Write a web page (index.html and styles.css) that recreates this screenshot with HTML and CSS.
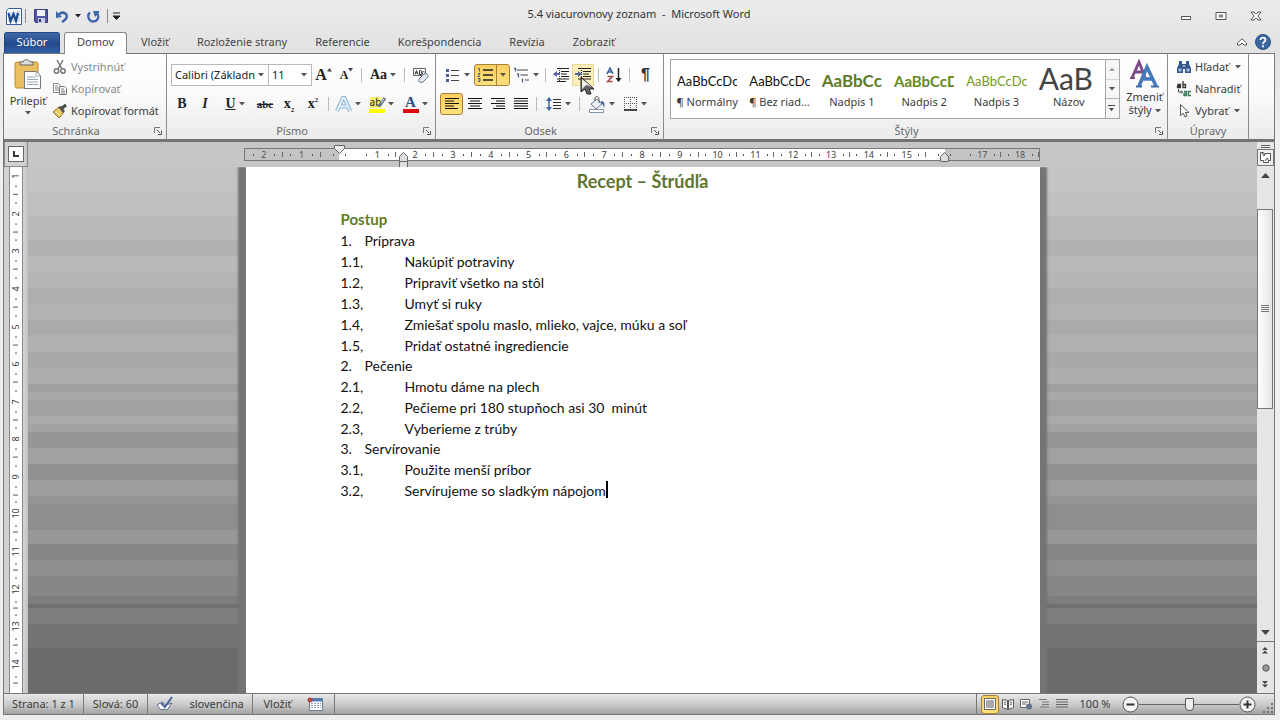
FILE: index.html
```html
<!DOCTYPE html>
<html lang="sk">
<head>
<meta charset="utf-8">
<meta name="viewport" content="width=device-width, initial-scale=1">
<title>5.4 viacurovnovy zoznam - Microsoft Word</title>
<link rel="stylesheet" href="styles.css">
</head>
<body>
<svg class="defs" aria-hidden="true">
  <symbol id="arrow" viewBox="0 0 6 4"><path d="M0 0h6L3 3.5z" fill="currentColor"/></symbol>
  <symbol id="launcher" viewBox="0 0 8 8"><path d="M.5 6V.5H6" fill="none" stroke="#777"/><path d="M3 3l3 3M7.500 4v3.500H4" fill="none" stroke="#555"/></symbol>
</svg>

<header class="titlebar">
  <div class="quick">
    <button class="qbtn" aria-label="Word"><svg width="16" height="17" viewBox="0 0 16 17"><path d="M2.500.5h13v16H.5v-14z" fill="#fff" stroke="#35609b"/><path d="M11 4h3M11 7h3M11 10h3M11 13h3" stroke="#7fa0cc"/><path d="M2 4h11v10H2z" fill="#d7e4f5"/><path d="M2.500 5l2 8L7.500 6l2.500 7 2-8" fill="none" stroke="#1d4a8c" stroke-width="2.200"/></svg></button>
    <span class="qsep"></span>
    <button class="qbtn wide" aria-label="Uložiť"><svg width="14" height="14" viewBox="0 0 14 14"><path d="M.5.5h13v13h-12l-1-1z" fill="#5556a0" stroke="#3b3c80"/><path d="M3 1h8v6H3z" fill="#eef1fa"/><path d="M4 9h7v5H4z" fill="#c9cce6"/><path d="M5 10h2v3H5z" fill="#333570"/></svg></button>
    <button class="qbtn" aria-label="Späť"><svg width="13" height="13" viewBox="0 0 13 13"><path d="M3 4.500C7 .5 13 4 10 8.500 9 10 8 11 6 12" fill="none" stroke="#3e66a8" stroke-width="2.500"/><path d="M0 1v7l6-1z" fill="#3e66a8"/></svg></button>
    <button class="qbtn slim" aria-label="Späť – zoznam"><svg class="arr dark"><use href="#arrow"/></svg></button>
    <button class="qbtn" aria-label="Znova"><svg width="13" height="13" viewBox="0 0 13 13"><path d="M3 2.500C0 5 1 11 6 11.500 11 11.500 13 6 9.500 3" fill="none" stroke="#3e66a8" stroke-width="2.300"/><path d="M6 1h6v2L8 7z" fill="#3e66a8"/></svg></button>
    <span class="qsep"></span>
    <button class="qbtn slim" aria-label="Prispôsobiť panel"><svg width="7" height="8" viewBox="0 0 7 8"><path d="M0 1h7M0 4h7L3.500 7.500z" stroke="#222" stroke-width="1" fill="#222"/></svg></button>
  </div>
  <h1 class="caption">5.4 viacurovnovy zoznam&nbsp; -&nbsp; Microsoft Word</h1>
  <div class="winbtns">
    <button aria-label="Minimalizovať"><svg width="12" height="12" viewBox="0 0 12 12"><path d="M1.500 6.500h9v3h-9z" fill="#fff" stroke="#555"/></svg></button>
    <button aria-label="Obnoviť"><svg width="12" height="12" viewBox="0 0 12 12"><path d="M1 2.500h10v7H1zM4.500 5h3v2h-3z" fill="#fff" stroke="#555"/></svg></button>
    <button aria-label="Zavrieť"><svg width="12" height="12" viewBox="0 0 12 12"><path d="M1 2h3l2 2 2-2h3L8 6l3 4H8L6 8l-2 2H1l3-4z" fill="#fff" stroke="#555"/></svg></button>
  </div>
</header>

<nav class="tabs" aria-label="Karty">
  <button class="tab file">Súbor</button>
  <button class="tab current">Domov</button>
  <button class="tab">Vložiť</button>
  <button class="tab">Rozloženie strany</button>
  <button class="tab">Referencie</button>
  <button class="tab">Korešpondencia</button>
  <button class="tab">Revízia</button>
  <button class="tab">Zobraziť</button>
  <span class="tabtools">
    <button aria-label="Zbaliť pás"><svg width="10" height="8" viewBox="0 0 10 8"><path d="M.5 5L5 .8 9.500 5v2H7L5 5 3 7H.5z" fill="#fff" stroke="#555"/></svg></button>
    <button aria-label="Pomocník"><svg width="16" height="16" viewBox="0 0 16 16"><circle cx="8" cy="8" r="7.500" fill="#3a669f" stroke="#29507f"/><path d="M5.500 6c0-3.500 5.200-3 5 0C10.400 7.700 8 7.500 8 10M8 11.300v1.900" fill="none" stroke="#fff" stroke-width="1.800"/></svg></button>
  </span>
</nav>

<section class="ribbon" aria-label="Domov">
  <div class="group clipboard">
    <div class="body">
      <button class="big"><svg width="28" height="31" viewBox="0 0 28 31"><rect x="1" y="3" width="23" height="26" rx="2" fill="#eabf62" stroke="#b98a35"/><path d="M6 6V3h3c0-3 7-3 7 0h3v3z" fill="#ddd" stroke="#666"/><path d="M10.500 12.500h12l4 4v13h-16z" fill="#fff" stroke="#777"/><path d="M22 12.500v4.500h4.500M13 18h9M13 20.500h11M13 23h11M13 25.500h11" fill="none" stroke="#9aa7b8"/></svg><span>Prilepiť</span><svg class="arr"><use href="#arrow"/></svg></button>
      <div class="stack">
        <button class="item off"><svg width="16" height="16" viewBox="0 0 16 16"><path d="M5 1l5 9M11 1L6 10" stroke="#777" stroke-width="1.500"/><circle cx="4.500" cy="12" r="2.200" fill="none" stroke="#777" stroke-width="1.500"/><circle cx="11" cy="12" r="2.200" fill="none" stroke="#777" stroke-width="1.500"/></svg>Vystrihnúť</button>
        <button class="item off"><svg width="16" height="16" viewBox="0 0 16 16"><path d="M1.500 2.500h5l2 2v7h-7z" fill="#fff" stroke="#888"/><path d="M3 5h3M3 7h4M3 9h4" stroke="#888"/><path d="M7.500 5.500h5l2 2v6h-7z" fill="#fff" stroke="#777"/><path d="M9 8h3M9 10h4M9 12h4" stroke="#777"/></svg>Kopírovať</button>
        <button class="item"><svg width="16" height="16" viewBox="0 0 16 16"><path d="M1 9l6-5 5 5-5 6z" fill="#e8ca62" stroke="#8a7227"/><path d="M6 4l3-1 4 5-2 2z" fill="#555"/><path d="M10 5l4-3" stroke="#444" stroke-width="3"/><path d="M4 9l4 3" stroke="#fff3b5"/></svg>Kopírovať formát</button>
      </div>
    </div>
    <footer><span>Schránka</span><button aria-label="Schránka – možnosti"><svg class="launch"><use href="#launcher"/></svg></button></footer>
  </div>

  <div class="group font">
    <div class="rows">
      <div class="row">
        <label class="combo name"><select aria-label="Písmo"><option>Calibri (Základn</option></select><svg class="arr"><use href="#arrow"/></svg></label>
        <label class="combo size"><select aria-label="Veľkosť písma"><option>11</option></select><svg class="arr"><use href="#arrow"/></svg></label>
        <button class="b24" aria-label="Zväčšiť písmo"><span class="serif lg">A</span><svg class="tip" viewBox="0 0 6 4"><path d="M0 3.500h5L2.500 0z" fill="#445"/></svg></button>
        <button class="b22" aria-label="Zmenšiť písmo"><span class="serif sm">A</span><svg class="tip" viewBox="0 0 6 4"><path d="M0 0h5L2.500 3.500z" fill="#445"/></svg></button>
        <i class="sep"></i>
        <button class="b36" aria-label="Zmeniť veľkosť písmen"><span class="serif md">Aa</span><svg class="arr"><use href="#arrow"/></svg></button>
        <i class="sep"></i>
        <button class="b24" aria-label="Vymazať formátovanie"><svg width="17" height="17" viewBox="0 0 17 17"><path d="M1.500 1.500h12v7h-12z" fill="#fff" stroke="#666"/><path d="M3 7.500l1.500-4L6 7.500M3.500 6h2M7.500 3.500v4h1.500c2 0 1-2 0-2 1 0 1-2-.3-2zM12.500 5c-3-2-3 4 0 2" fill="none" stroke="#333"/><path d="M7 12l5-5c4-1 5 2 3 4l-4 4c-3 1-5 0-4-3z" fill="#e4e8ef" stroke="#66758c"/></svg></button>
      </div>
      <div class="row">
        <button class="b22 serif md">B</button>
        <button class="b24 serif md ital">I</button>
        <button class="b36"><span class="serif md under">U</span><svg class="arr"><use href="#arrow"/></svg></button>
        <button class="b24 serif tiny strike">abc</button>
        <button class="b24 serif md" aria-label="Dolný index"><span>x<sub>2</sub></span></button>
        <button class="b24 serif md" aria-label="Horný index"><span>x<sup>2</sup></span></button>
        <i class="sep"></i>
        <button class="b32" aria-label="Textové efekty"><svg width="17" height="17" viewBox="0 0 17 17"><path d="M2 15L8 2h1.500L15 15M5 10.500h7" fill="none" stroke="#8fb4d6" stroke-width="4"/><path d="M2 15L8 2h1.500L15 15M5 10.500h7" fill="none" stroke="#eaf4fc" stroke-width="1.800"/></svg><svg class="arr"><use href="#arrow"/></svg></button>
        <button class="b34" aria-label="Zvýraznenie"><span class="swatch hl"><b>ab</b><svg width="9" height="11" viewBox="0 0 9 11"><path d="M8 1L3 8l-2 1" stroke="#66758a" stroke-width="3" fill="none"/><path d="M7 2L4 6" stroke="#dfe6ee"/></svg></span><svg class="arr"><use href="#arrow"/></svg></button>
        <button class="b34" aria-label="Farba písma"><span class="swatch fc"><b>A</b></span><svg class="arr"><use href="#arrow"/></svg></button>
      </div>
    </div>
    <footer><span>Písmo</span><button aria-label="Písmo – možnosti"><svg class="launch"><use href="#launcher"/></svg></button></footer>
  </div>

  <div class="group para">
    <div class="rows">
      <div class="row">
        <button class="b34" aria-label="Odrážky"><svg width="16" height="16" viewBox="0 0 16 16"><path d="M6 3.500h8M6 8.500h8M6 13.500h8" stroke="#444"/><path d="M1 2h3v3H1zM1 7h3v3H1zM1 12h3v3H1z" fill="#4a5f93"/></svg><svg class="arr"><use href="#arrow"/></svg></button>
        <button class="split active" aria-label="Číslovanie"><svg width="22" height="16" viewBox="0 0 22 16"><path d="M9 3h10M9 8h10M9 13h10" stroke="#222" stroke-width="1.300"/><path d="M4 1.500h1.500v3M4 6.500h2l-2 3h2M4 11.500h2v3H4M4.500 13H6" fill="none" stroke="#45608e"/></svg><span class="drop"><svg class="arr"><use href="#arrow"/></svg></span></button>
        <button class="b32" aria-label="Viacúrovňový zoznam"><svg width="17" height="16" viewBox="0 0 17 16"><path d="M4 3h11M7.500 8H15M12 13h4" stroke="#444"/><path d="M1 1.500h1.500v3M5.500 6.500v4M4 7h1M9.500 11.500v4" fill="none" stroke="#45608e" stroke-width="1.300"/></svg><svg class="arr"><use href="#arrow"/></svg></button>
        <i class="sep"></i>
        <button class="b24" aria-label="Zmenšiť zarážku"><svg width="16" height="16" viewBox="0 0 16 16"><path d="M4 1.500h12M8 4.500h8M8 7h6M8 9.500h8M4 12h12M4 14.500h9" stroke="#222"/><path d="M6.500 1v14" stroke="#222" stroke-dasharray="1 1"/><path d="M0 7l4-3v2h3v2H4v2z" fill="#5a63b0"/></svg></button>
        <button class="b22 hover" aria-label="Zväčšiť zarážku"><svg width="16" height="16" viewBox="0 0 16 16"><path d="M3 1.500h13M8 4.500h8M8 7h6M8 9.500h8M3 12h13" stroke="#222"/><path d="M6.500 1v14" stroke="#222" stroke-dasharray="1 1"/><path d="M7 7L3 4v2H0v2h3v2z" fill="#4d64a0"/></svg>
          <svg class="pointer" width="16" height="20" viewBox="0 0 16 20"><path d="M1 1v15l4-3 2 5h4l-2-5h5z" fill="#666" stroke="#222"/><path d="M2 3v10l3-3 2-1 5 2z" fill="#eee"/></svg></button>
        <i class="sep wide"></i>
        <button class="b22" aria-label="Zoradiť"><svg width="17" height="16" viewBox="0 0 17 16"><path d="M1 7l3-6 3 6M2 5h4" fill="none" stroke="#3a5b97" stroke-width="1.500"/><path d="M1.500 9.500h5l-5 5h5" fill="none" stroke="#a34a52" stroke-width="1.500"/><path d="M12.500 1v13" stroke="#222" stroke-width="1.500"/><path d="M9.500 11h6l-3 4z" fill="#222"/></svg></button>
        <i class="sep wide"></i>
        <button class="b24 pilcrow" aria-label="Zobraziť všetko">¶</button>
      </div>
      <div class="row">
        <button class="b24 active" aria-label="Zarovnať vľavo"><svg width="14" height="14" viewBox="0 0 14 14"><path d="M0 1.500h14M0 4h9M0 6.500h14M0 9h9M0 11.500h13" stroke="#111" stroke-width="1.200"/></svg></button>
        <button class="b24" aria-label="Centrovať"><svg width="14" height="14" viewBox="0 0 14 14"><path d="M0 1.500h14M2 4h10M0 6.500h14M2 9h10M0 11.500h14" stroke="#111" stroke-width="1.200"/></svg></button>
        <button class="b24" aria-label="Zarovnať vpravo"><svg width="14" height="14" viewBox="0 0 14 14"><path d="M0 1.500h14M5 4h9M0 6.500h14M5 9h9M2 11.500h12" stroke="#111" stroke-width="1.200"/></svg></button>
        <button class="b24" aria-label="Podľa okraja"><svg width="14" height="14" viewBox="0 0 14 14"><path d="M0 1.500h14M0 4h14M0 6.500h14M0 9h14M0 11.500h14" stroke="#111" stroke-width="1.200"/></svg></button>
        <i class="sep wide"></i>
        <button class="b34" aria-label="Riadkovanie"><svg width="16" height="16" viewBox="0 0 16 16"><path d="M7 3.500h8M7 6.500h8M7 9.500h8M7 12.500h8" stroke="#333"/><path d="M3 2v12" stroke="#3f659f" stroke-width="1.500"/><path d="M0 5l3-4 3 4zM0 11l3 4 3-4z" fill="#3f659f"/></svg><svg class="arr"><use href="#arrow"/></svg></button>
        <i class="sep wide"></i>
        <button class="b34" aria-label="Podfarbenie"><svg width="18" height="17" viewBox="0 0 18 17"><path d="M3 8l6-5 5 5-6 5z" fill="#e9eef4" stroke="#66758a"/><path d="M7 5V2c0-2 4-2 4 1v4" fill="none" stroke="#555"/><path d="M13 5c4 0 4 4 3 7-1-3-1-4-3-5z" fill="#41679b"/><path d="M1.500 13.500h14v3h-14z" fill="#fff" stroke="#8494aa"/></svg><svg class="arr"><use href="#arrow"/></svg></button>
        <button class="b34" aria-label="Orámovanie"><svg width="14" height="14" viewBox="0 0 14 14"><path d="M.5 0v13M6.500 0v13M12.500 0v13M0 .5h13M0 6.500h13" stroke="#555" stroke-dasharray="1 1"/><path d="M0 13h13" stroke="#111" stroke-width="1.500"/></svg><svg class="arr"><use href="#arrow"/></svg></button>
      </div>
    </div>
    <footer><span>Odsek</span><button aria-label="Odsek – možnosti"><svg class="launch"><use href="#launcher"/></svg></button></footer>
  </div>

  <div class="group styles">
    <div class="body">
      <div class="gallery">
        <button class="style"><span class="sample">AaBbCcDc</span><span class="label">¶ Normálny</span></button>
        <button class="style"><span class="sample">AaBbCcDc</span><span class="label">¶ Bez riad...</span></button>
        <button class="style"><span class="sample h1">AaBbCc</span><span class="label">Nadpis 1</span></button>
        <button class="style"><span class="sample h2">AaBbCcD</span><span class="label">Nadpis 2</span></button>
        <button class="style"><span class="sample h3">AaBbCcDc</span><span class="label">Nadpis 3</span></button>
        <button class="style"><span class="sample ttl">AaB</span><span class="label">Názov</span></button>
        <div class="scroller">
          <button aria-label="Nahor" class="off"><svg class="arr up"><use href="#arrow"/></svg></button>
          <button aria-label="Nadol"><svg class="arr"><use href="#arrow"/></svg></button>
          <button aria-label="Viac"><svg width="8" height="7" viewBox="0 0 8 7"><path d="M0 .5h7" stroke="#444"/><path d="M1 3h5L3.500 6z" fill="#444"/></svg></button>
        </div>
      </div>
      <button class="big change"><svg width="30" height="30" viewBox="0 0 30 30"><path d="M2 19L9 3l6 15M5 13h8" fill="none" stroke="#7b4a86" stroke-width="2.800"/><path d="M0 19h5M12 19h5" stroke="#7b4a86" stroke-width="2"/><path d="M9 27L17 8l9 19M12 20h10" fill="none" stroke="#4679b9" stroke-width="3.500"/><path d="M6 27.500h6M21 27.500h8" stroke="#3768a8" stroke-width="2"/></svg><span>Zmeniť<br>štýly <svg class="arr"><use href="#arrow"/></svg></span></button>
    </div>
    <footer><span>Štýly</span><button aria-label="Štýly – možnosti"><svg class="launch"><use href="#launcher"/></svg></button></footer>
  </div>

  <div class="group edit">
    <div class="body"><div class="stack">
      <button class="item"><svg width="16" height="16" viewBox="0 0 16 16"><path d="M3 2h3v3h4V2h3v3l2 4v5H9v-4H7v4H1V9l2-4z" fill="#2f568d"/><path d="M2.500 9.500h3v3h-3zM10.500 9.500h3v3h-3z" fill="#a9c2e2"/><path d="M6.500 7h3" stroke="#fff"/></svg>Hľadať<svg class="arr"><use href="#arrow"/></svg></button>
      <button class="item"><svg width="16" height="16" viewBox="0 0 16 16"><path d="M1.500 3.500h3v3h-3v-1.500h3M7 0v6.500h2.500v-3H7" fill="none" stroke="#333" stroke-width="1.300"/><path d="M2.500 8v3h4M5 9.500L6.500 11 5 12.500" fill="none" stroke="#444"/><path d="M8 10.500h2.500v4H8v-2h2M15 10.500h-2.500v4H15" fill="none" stroke="#2f7a52" stroke-width="1.300"/></svg>Nahradiť</button>
      <button class="item"><svg width="16" height="16" viewBox="0 0 16 16"><path d="M4.500 1.500v11l2.700-2.300L9 14l2-1-1.700-3.500H13z" fill="#fff" stroke="#555"/></svg>Vybrať<svg class="arr"><use href="#arrow"/></svg></button>
    </div></div>
    <footer><span>Úpravy</span></footer>
  </div>
  <div class="rest"></div>
</section>

<main class="work">
  <aside class="leftbar">
    <button class="tabstop" aria-label="Zarážka tabulátora"><svg width="6" height="6" viewBox="0 0 6 6"><path d="M1 0v5h5" fill="none" stroke="#333" stroke-width="2"/></svg></button>
    <div class="vruler">
      <span>1</span><span>2</span><span>3</span><span>4</span><span>5</span><span>6</span><span>7</span><span>8</span><span>9</span><span>10</span><span>11</span><span>12</span><span>13</span><span>14</span><span></span>
    </div>
  </aside>

  <div class="canvas">
    <div class="rulerbar">
      <div class="hruler">
        <span class="m">2</span><span class="m">1</span><span class="zero"><svg class="mark first" width="11" height="9" viewBox="0 0 11 9"><path d="M.5.5h10v3L5.500 8.500l-5-5z" fill="#eee" stroke="#666"/></svg></span><span>1</span><span>2<svg class="mark hang" width="9" height="16" viewBox="0 0 9 16"><path d="M4.500.5l4 4v5h-8v-5zM.5 9.500h8v6h-8z" fill="#ddd" stroke="#666"/></svg></span><span>3</span><span>4</span><span>5</span><span>6</span><span>7</span><span>8</span><span>9</span><span>10</span><span>11</span><span>12</span><span>13</span><span>14</span><span>15</span><span class="end"><svg class="mark right" width="9" height="10" viewBox="0 0 9 10"><path d="M4.500.5l4 4v5h-8v-5z" fill="#ddd" stroke="#666"/></svg></span><span class="m">17</span><span class="m">18</span>
      </div>
    </div>
    <article class="page">
      <h2 class="title">Recept – Štrúdľa</h2>
      <h3 class="sub">Postup</h3>
      <ol class="outline">
        <li><p><span>1.</span>Príprava</p>
          <ol>
            <li><span>1.1,</span>Nakúpiť potraviny</li>
            <li><span>1.2,</span>Pripraviť všetko na stôl</li>
            <li><span>1.3,</span>Umyť si ruky</li>
            <li><span>1.4,</span>Zmiešať spolu maslo, mlieko, vajce, múku a soľ</li>
            <li><span>1.5,</span>Pridať ostatné ingrediencie</li>
          </ol></li>
        <li><p><span>2.</span>Pečenie</p>
          <ol>
            <li><span>2.1,</span>Hmotu dáme na plech</li>
            <li><span>2.2,</span>Pečieme pri 180 stupňoch asi 30&nbsp; minút</li>
            <li><span>2.3,</span>Vyberieme z trúby</li>
          </ol></li>
        <li><p><span>3.</span>Servírovanie</p>
          <ol>
            <li><span>3.1,</span>Použite menší príbor</li>
            <li><span>3.2,</span>Servírujeme so sladkým nápojom<i class="caret"></i></li>
          </ol></li>
      </ol>
    </article>
  </div>

  <aside class="scrollbar">
    <i class="splitter"></i>
    <button class="toggle" aria-label="Pravítko"><svg width="13" height="13" viewBox="0 0 13 13"><path d="M1.500 1.500h3l1 2 1-1h5v7h-2v2h-5v-2h-3z" fill="#fff" stroke="#555"/><path d="M3 2l2 3 2-3M6 10l2-3 2 3" fill="none" stroke="#555"/></svg></button>
    <button class="step" aria-label="Posunúť nahor"><svg width="9" height="5" viewBox="0 0 9 5"><path d="M0 5h9L4.500 0z" fill="#444"/></svg></button>
    <div class="track"><div class="thumb"><svg width="8" height="8" viewBox="0 0 8 8"><path d="M0 .5h8M0 2.500h8M0 4.500h8M0 6.500h8" stroke="#777"/></svg></div></div>
    <button class="step" aria-label="Posunúť nadol"><svg width="9" height="5" viewBox="0 0 9 5"><path d="M0 0h9L4.500 5z" fill="#444"/></svg></button>
    <div class="browse">
      <button aria-label="Predchádzajúca strana"><svg width="7" height="7" viewBox="0 0 7 7"><path d="M0 3h6L3 0zM0 6.500h6L3 3.500z" fill="#444"/></svg></button>
      <button aria-label="Vybrať objekt"><svg width="8" height="8" viewBox="0 0 8 8"><circle cx="4" cy="4" r="3.200" fill="#999" stroke="#555"/></svg></button>
      <button aria-label="Ďalšia strana"><svg width="7" height="7" viewBox="0 0 7 7"><path d="M0 0h6L3 3zM0 3.500h6l-3 3z" fill="#444"/></svg></button>
    </div>
  </aside>
</main>

<footer class="status">
  <button class="s1">Strana: 1 z 1</button>
  <button class="s2">Slová: 60</button>
  <button class="s3"><svg width="18" height="16" viewBox="0 0 18 16"><path d="M1 9l5-3 4 3 6-2-5 7-3-1-3 1z" fill="#fff" stroke="#5d6f91"/><path d="M5 7l4 4 7-10" fill="none" stroke="#4a6296" stroke-width="2"/></svg><span>slovenčina</span></button>
  <button class="s4"><span>Vložiť</span><svg width="16" height="14" viewBox="0 0 16 14"><path d="M2.500 1.500h13v12h-13z" fill="#fff" stroke="#6d7b93"/><path d="M3 3h12" stroke="#4f78b5" stroke-width="3"/><path d="M4 6.500h10M4 8.500h10M4 10.500h10" stroke="#8ea3c4" stroke-dasharray="2 1"/><circle cx="3" cy="3" r="2.500" fill="#b5473c"/></svg></button>
  <div class="views">
    <button class="active" aria-label="Rozloženie pri tlači"><svg width="12" height="12" viewBox="0 0 12 12"><path d="M.5.5h11v11H.5z" fill="#fff" stroke="#666"/><path d="M2 3h8M2 5h8M2 7h8M2 9h8" stroke="#555"/></svg></button>
    <button aria-label="Čítanie"><svg width="12" height="12" viewBox="0 0 12 12"><path d="M.5 1.500l5 1v9l-5-2zM11.500 1.500l-5 1v9l5-2z" fill="#fff" stroke="#555"/><path d="M2 4l2 .5M2 6l2 .5M8 4.500l2-.5M8 6.500l2-.5" stroke="#555"/></svg></button>
    <button aria-label="Web"><svg width="12" height="12" viewBox="0 0 12 12"><path d="M.5 1.500h9v8h-9z" fill="#fff" stroke="#666"/><path d="M2 4h6M2 6h4" stroke="#666"/><circle cx="9" cy="8.500" r="3" fill="#5f748f"/></svg></button>
    <button aria-label="Prehľad"><svg width="12" height="12" viewBox="0 0 12 12"><path d="M1 1.500h8M4 4h7M4 6.500h7M2 9h9" stroke="#777"/></svg></button>
    <button aria-label="Koncept"><svg width="12" height="12" viewBox="0 0 12 12"><path d="M0 1.500h12M0 4h12M0 6.500h12M0 9h12" stroke="#666"/></svg></button>
  </div>
  <button class="pct">100 %</button>
  <div class="zoom">
    <button aria-label="Oddialiť"><svg width="17" height="17" viewBox="0 0 17 17"><circle cx="8.500" cy="8.500" r="7.500" fill="#f4f4f4" stroke="#555"/><path d="M4.500 8.500h8" stroke="#333" stroke-width="2"/></svg></button>
    <input type="range" min="0" max="100" value="50" aria-label="Mierka">
    <button aria-label="Priblížiť"><svg width="17" height="17" viewBox="0 0 17 17"><circle cx="8.500" cy="8.500" r="7.500" fill="#f4f4f4" stroke="#555"/><path d="M4.500 8.500h8M8.500 4.500v8" stroke="#333" stroke-width="2"/></svg></button>
  </div>
  <svg class="grip" width="10" height="10" viewBox="0 0 10 10"><path d="M8 0h2v2H8zM4 4h2v2H4zM8 4h2v2H8zM0 8h2v2H0zM4 8h2v2H4zM8 8h2v2H8z" fill="#777"/></svg>
</footer>
</body>
</html>
```
FILE: styles.css
```css
* { box-sizing: border-box; }
body {
  margin: 0;
  min-height: 100vh;
  display: flex;
  flex-direction: column;
  padding: 0 5px 5px 3px;
  background: linear-gradient(#ececec, #e2e2e2 50px, #f0f0f0 140px, #eeeeee);
  font: 11px/14px "Noto Sans", "Open Sans", sans-serif;
  color: #3b3b3b;
}
button {
  margin: 0;
  padding: 0;
  border: 0;
  background: none;
  font: inherit;
  color: inherit;
  display: flex;
  align-items: center;
  justify-content: center;
  white-space: nowrap;
}
svg { display: block; flex: none; }
.defs { position: absolute; width: 0; height: 0; }
.arr { width: 6px; height: 4px; color: #555; }
.arr.dark { color: #222; }
.arr.up { transform: rotate(180deg); }

/* Title bar */
.titlebar {
  display: grid;
  grid-template-columns: 1fr auto 1fr;
  align-items: center;
  height: 32px;
}
.quick { display: flex; align-items: center; padding-left: 2px; }
.qbtn { width: 21px; height: 22px; }
.qbtn:first-child { width: 17px; }
.qbtn.wide { width: 23px; }
.qbtn.slim { width: 10px; }
.qsep { width: 1px; height: 14px; margin: 0 3px; background: #888; }
.caption { margin: 0; padding-bottom: 4px; font-size: 11px; font-weight: 400; color: #333; }
.winbtns { display: flex; justify-content: flex-end; gap: 23px; padding-right: 13px; }

/* Tabs */
.tabs { display: flex; align-items: stretch; height: 21px; padding-left: 1px; }
.tab { padding: 0 14px 2px; color: #444; }
.tab.file {
  width: 56px;
  margin-right: 4px;
  padding: 0 0 2px;
  border: 1px solid #24477f;
  border-bottom: 0;
  border-radius: 3px 3px 0 0;
  background: linear-gradient(#3f68a8, #234a8a 55%, #3060a8);
  color: #fff;
}
.tab.current {
  width: 63px;
  margin-bottom: -1px;
  padding: 0 0 3px;
  border: 1px solid #888;
  border-bottom: 0;
  border-radius: 3px 3px 0 0;
  background: #fff;
  z-index: 1;
}
.tabtools { display: flex; align-items: center; gap: 8px; margin-left: auto; padding: 0 4px 2px 0; }

/* Ribbon */
.ribbon {
  display: flex;
  height: 89px;
  border: 1px solid #777;
  border-bottom: 3px solid #747474;
  background: linear-gradient(#fff, #fbfbfb 45%, #ebebeb);
}
.group { display: flex; flex-direction: column; border-right: 1px solid #8c8c8c; }
.clipboard { width: 163px; }
.font { width: 269px; }
.para { width: 228px; }
.styles { flex: 1; min-width: 0; }
.edit { width: 81px; }
.rest { width: 25px; }
.body { display: flex; flex: 1; min-height: 0; }
.group footer { display: flex; align-items: center; height: 16px; padding-right: 4px; color: #66696f; }
.group footer span { flex: 1; padding-right: 6px; text-align: center; }
.edit footer, .group.edit footer span { padding: 0; }
.launch { width: 8px; height: 8px; }
.big { flex-direction: column; justify-content: flex-start; width: 48px; padding-top: 5px; gap: 4px; line-height: 13px; }
.change { gap: 1px; width: 45px; }
.change .arr { display: inline-block; vertical-align: middle; }
.stack { display: flex; flex-direction: column; padding-top: 2px; }
.item { justify-content: flex-start; gap: 3px; height: 22px; }
.item .arr { margin-left: 3px; }
.edit .stack { padding-left: 8px; }
.off { color: #888; }
.rows { display: flex; flex: 1; flex-direction: column; gap: 7px; padding: 10px 0 0 4px; }
.row { display: flex; height: 22px; }
.row button { gap: 3px; }
.b22 { width: 22px; }
.b24 { width: 24px; }
.b32 { width: 32px; }
.b34 { width: 34px; }
.b36 { width: 36px; }
.para .b24 { width: 23px; }
.sep { width: 1px; height: 14px; margin: 4px 3px; background: #bbb; }
.sep.wide { margin: 4px 4px; }
.combo { display: grid; height: 22px; border: 1px solid #b9b9b9; background: #fff; align-items: center; }
.combo > * { grid-area: 1 / 1; }
.combo .arr { justify-self: end; margin-right: 4px; }
.combo select {
  width: 100%;
  height: 20px;
  padding: 0 0 0 3px;
  border: 0;
  appearance: none;
  background: none;
  font: inherit;
  color: #222;
}
.name { width: 98px; }
.size { width: 43px; border-left: 0; }
.serif { font-family: "Liberation Serif", serif; font-weight: 700; color: #222; }
.lg { font-size: 16px; }
.md { font-size: 14px; }
.sm { font-size: 12px; }
.tiny { font-size: 11px; }
.row .tip { width: 6px; height: 4px; align-self: flex-start; margin-top: 4px; }
.row button:has(.tip) { gap: 0; }
.ital { font-style: italic; }
.under { text-decoration: underline; }
.strike { text-decoration: line-through; }
sub, sup { font-size: 7px; line-height: 1px; }
.swatch { display: flex; align-items: center; justify-content: center; width: 16px; height: 17px; border-bottom: 4px solid; font-size: 10px; }
.swatch b { font-weight: 400; color: #222; }
.hl { border-color: #ff0; }
.hl b { background: #f5f06a; line-height: 11px; margin-right: -4px; }
.hl svg { margin-right: -3px; }
.fc { border-color: #e00b12; }
.fc b { font: 700 15px/13px "Liberation Serif", serif; color: #33507e; }
.active { border: 1px solid #a9803a; border-radius: 3px; background: linear-gradient(#fbd060, #fde07c); }
.row .split { gap: 0; width: 36px; }
.split svg:first-child { margin-left: -1px; }
.drop { display: flex; align-items: center; justify-content: center; align-self: stretch; flex: 1; border-left: 1px solid #a9803a; }
.hover { position: relative; border: 1px solid #ead795; background: #fcefb9; }
.pointer { position: absolute; left: 7px; top: 11px; }
.pilcrow { font: 700 16px/20px "Liberation Sans", sans-serif; color: #333; }

/* Style gallery */
.gallery { display: flex; flex: 1; min-width: 0; height: 60px; margin: 5px 2px 0 6px; border: 1px solid #a5a5a5; background: #fff; }
.style { flex: 1 1 0; min-width: 0; flex-direction: column; padding: 0 6px; }
.sample { width: 100%; height: 32px; overflow: hidden; text-align: left; font: 13px/36px Lato, sans-serif; color: #111; }
.label { line-height: 14px; height: 20px; }
.h1 { font-size: 17px; font-weight: 700; color: #5f7a25; }
.h2 { font-size: 15px; color: #668a1b; font-weight: 700; }
.h3 { font-size: 13px; color: #739a20; }
.ttl { font-size: 30px; line-height: 30px; color: #444; }
.scroller { display: flex; flex-direction: column; width: 14px; border-left: 1px solid #a5a5a5; background: #f6f6f6; }
.scroller button { flex: 1; border-bottom: 1px solid #b5b5b5; }
.scroller button:last-child { border-bottom: 0; }
.scroller .off { opacity: .5; }

/* Workspace */
.work { display: flex; flex: 1; border: 1px solid #777; border-width: 0 1px 0 1px; background: #c6c6c6; }
.leftbar { display: flex; flex-direction: column; width: 24px; background: linear-gradient(90deg, #d2d2d2 20px, #c2c2c2); }
.tabstop { width: 24px; height: 25px; border: 1px solid #888; border-top: 0; }
.tabstop svg { box-sizing: content-box; padding: 4px; border: 1px solid #666; background: #fff; }
.vruler {
  display: grid;
  flex: 1;
  grid-template-rows: .74fr repeat(13, 1fr) .26fr;
  width: 14px;
  margin-left: 5px;
  border: 1px solid #888;
  border-width: 0 1px;
  background: #fff;
  font-size: 9px;
  line-height: 12px;
}
.vruler span {
  display: flex;
  min-height: 0;
  align-items: center;
  justify-content: space-evenly;
  writing-mode: vertical-rl;
  transform: rotate(180deg);
  background: linear-gradient(#555, #555) center top / 5px 1px no-repeat;
}
.vruler span::before, .vruler span::after { content: ""; width: 2px; height: 1px; background: #555; }
.vruler span:first-child { justify-content: flex-start; gap: 7px; padding-top: 8px; }
.vruler span:first-child::after { display: none; }
.vruler span:last-child { background: none; }
.vruler span:last-child::before, .vruler span:last-child::after { display: none; }
.canvas {
  display: flex;
  flex: 1;
  flex-direction: column;
  align-items: center;
  min-width: 0;
  background: linear-gradient(#c6c6c6 24px, #c4c4c4 24px 50px, #c0c0c0 50px 74px, #b9b9b9 74px 98px, #b1b1b1 98px 114px, #b9b9b9 114px 130px, #b6b6b6 130px 146px, #aeaeae 146px 162px, #b2b2b2 162px 178px, #aaa 178px 193px, #b0b0b0 193px 210px, #a8a8a8 210px 226px, #adadad 226px 242px, #9f9f9f 242px 250px, #a8a8a8 250px 258px, #a1a1a1 258px 274px, #aaa 274px 282px, #a3a3a3 282px 290px, #969696 290px 306px, #a1a1a1 306px 322px, #919191 322px 338px, #9d9d9d 338px 354px, #959595 354px 362px, #8e8e8e 362px 388px, #989898 388px 402px, #868686 402px 418px, #8e8e8e 418px 434px, #868686 434px 454px, #7d7d7d 454px 462px, #707070 462px 466px, #7e7e7e 466px 482px, #747474 482px 506px, #6b6b6b 506px);
}
.rulerbar { display: flex; width: 100%; height: 25px; padding: 6px 1px 0 0; justify-content: center; background: #c6c6c6; }
.hruler {
  display: grid;
  grid-template-columns: repeat(21, 1fr);
  width: 796px;
  height: 13px;
  border: 1px solid #777;
  background: #fff;
  font-size: 9px;
  line-height: 11px;
}
.hruler span {
  display: flex;
  align-items: center;
  justify-content: space-evenly;
  position: relative;
  background: linear-gradient(#666, #666) right center / 1px 5px no-repeat;
}
.hruler span::before, .hruler span::after { content: ""; width: 1px; height: 2px; background: #555; }
.hruler .m { background-color: #c3c3c3; color: #555; }
.hruler .zero { background-image: linear-gradient(90deg, #c3c3c3 50%, #fff 50%); background-size: 100% 100%; }
.hruler .end { background-image: linear-gradient(90deg, #fff 50%, #c3c3c3 50%); background-size: 100% 100%; }
.mark { position: absolute; }
.first { left: 13px; top: -4px; }
.hang { left: 3px; top: 3px; }
.right { left: 14px; top: 3px; }
.page {
  flex: 1;
  width: 794px;
  padding: 0 95px;
  background: #fff;
  box-shadow: -8px 0 2px #747474, 7px 0 2px #747474;
  clip-path: inset(0 -12px);
  font: 14px/21px Lato, sans-serif;
  color: #111;
}
.title { margin: 0; font-size: 18px; line-height: 28px; text-align: center; color: #5f7530; }
.sub { margin: 14px 0 1px; font-size: 15px; line-height: 21px; color: #5f7d1f; }
.outline, .outline ol { margin: 0; padding: 0; list-style: none; }
.outline p { display: flex; margin: 0; line-height: 20px; }
.outline p span { width: 24px; }
.outline ol li { display: flex; line-height: 21px; }
.outline ol span { width: 64px; }
.caret { width: 2px; height: 17px; margin-top: 1px; background: #000; }

/* Vertical scrollbar */
.scrollbar { display: flex; flex-direction: column; width: 17px; background: #e6e6e6; }
.splitter { height: 3px; margin: 3px 4px 1px; border: 1px solid #666; border-width: 1px 0; }
.toggle { height: 17px; border: 1px solid #777; background: #eee; }
.step { height: 18px; }
.track { flex: 1; padding-top: 25px; }
.thumb { display: flex; align-items: center; justify-content: center; width: 16px; height: 200px; border: 1px solid #777; background: linear-gradient(90deg, #fff, #e4e4e4); }
.browse { display: flex; flex-direction: column; height: 52px; border-top: 1px solid #777; }
.browse button { flex: 1; }

/* Status bar */
.status {
  display: flex;
  align-items: stretch;
  height: 22px;
  border: 1px solid #777;
  background: linear-gradient(#e8e8e8, #c9c9c9 55%, #a2a2a2);
}
.s1, .s2, .s3, .s4 { border-right: 1px solid #777; }
.s1 { width: 80px; }
.s2 { width: 64px; }
.s3 { width: 105px; gap: 15px; }
.s4 { width: 82px; gap: 16px; }
.views { display: flex; align-items: center; margin-left: auto; padding-left: 4px; border-left: 1px solid #777; }
.views button { width: 18px; height: 19px; }
.pct { width: 48px; }
.zoom { display: flex; align-items: center; margin-left: 3px; }
.zoom input { width: 100px; height: 17px; margin: 0; appearance: none; background: linear-gradient(#666, #666) center / 100% 1px no-repeat; }
.zoom input::-webkit-slider-thumb { appearance: none; width: 9px; height: 13px; border: 1px solid #555; border-radius: 1px 1px 4px 4px; background: #eee; }
.grip { align-self: flex-end; margin: 0 1px 1px 7px; }
```
